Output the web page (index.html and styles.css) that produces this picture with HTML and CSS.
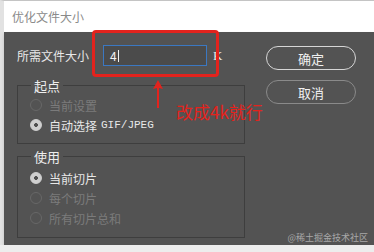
FILE: index.html
```html
<!DOCTYPE html>
<html lang="zh-CN">
  <head>
    <meta charset="UTF-8" />
    <title>优化文件大小</title>
    <link rel="stylesheet" href="styles.css">
  </head>
  <body>
    <div class="window">
      <div class="titlebar">优化文件大小</div>
      <div class="panel">
        <div class="main">
          <div class="size-row">
            <label class="size-label">所需文件大小</label>
            <div class="size-input">4<span class="caret"></span></div>
            <span class="unit">K</span>
          </div>
          <fieldset class="group">
            <legend>起点</legend>
            <div class="option disabled"><span class="radio"></span>当前设置</div>
            <div class="option"><span class="radio checked"></span>自动选择 <span class="mono">GIF/JPEG</span></div>
          </fieldset>
          <fieldset class="group use">
            <legend>使用</legend>
            <div class="option"><span class="radio checked"></span>当前切片</div>
            <div class="option disabled"><span class="radio"></span>每个切片</div>
            <div class="option disabled"><span class="radio"></span>所有切片总和</div>
          </fieldset>
        </div>
        <div class="actions">
          <button class="btn primary">确定</button>
          <button class="btn">取消</button>
        </div>
      </div>

      <!-- annotation drawn over the dialog -->
      <div class="note-box"></div>
      <svg class="note-arrow" width="12" height="28" viewBox="0 0 12 28">
        <path d="M6 0 L11 9 L7 8 L7 28 L5 28 L5 8 L1 9 Z" fill="#e3231d" />
      </svg>
      <div class="note-text">改成4k就行</div>
      <div class="watermark">@稀土掘金技术社区</div>
      <div class="edge"></div>
    </div>
  </body>
</html>
```

FILE: styles.css
```css
body {
  margin: 0;
  background: #ededed;
  font-family: "Noto Sans CJK SC", "Liberation Sans", sans-serif;
}
.window {
  position: relative;
  width: 370px;
  border-left: 4px solid #e2e2e2;
  border-top: 1px solid #c4c4c4;
}
.titlebar {
  height: 31px;
  background: #ffffff;
  color: #8a8a8a;
  font-size: 12px;
  line-height: 31px;
  padding-left: 8px;
}
.panel {
  display: flex;
  height: 213px;
  background: #535353;
  color: #e8e8e8;
  box-shadow: 0 2px 3px rgba(0, 0, 0, 0.15);
}
.main {
  width: 228px;
  padding: 13px 0 0 13px;
}
.size-row {
  display: flex;
  align-items: center;
  font-size: 12px;
}
.size-label {
  width: 72px;
  margin-right: 14px;
}
.size-input {
  width: 96px;
  height: 19px;
  border: 1px solid #3b78c2;
  background: #4b4b4b;
  color: #f2f2f2;
  font-size: 12px;
  line-height: 19px;
  padding-left: 6px;
}
.caret {
  display: inline-block;
  width: 1px;
  height: 12px;
  background: #f2f2f2;
  margin-left: 1px;
  vertical-align: -1px;
}
.unit {
  margin-left: 6px;
  font-family: "Liberation Serif", serif;
  font-size: 13px;
}
.group {
  margin: 10px 0 0 0;
  padding: 0 0 8px 12px;
  border: 1px solid #3e3e3e;
  font-size: 12px;
}
.group.use {
  margin-top: 3px;
  padding-top: 2px;
  padding-bottom: 9px;
}
.group legend {
  font-size: 13px;
  padding: 0 3px;
  margin-left: 1px;
  color: #eeeeee;
}
.option {
  display: flex;
  align-items: center;
  height: 20px;
}
.option.disabled {
  color: #7b7b7b;
}
.radio {
  width: 10px;
  height: 10px;
  border: 1px solid #676767;
  border-radius: 50%;
  margin-right: 7px;
}
.radio.checked {
  background: radial-gradient(circle, #505050 0 1.6px, #cfcfcf 2.2px);
  border-color: #cfcfcf;
}
.mono {
  font-family: "Liberation Mono", monospace;
  font-size: 11px;
  margin-left: 4px;
}
.actions {
  display: flex;
  flex-direction: column;
  gap: 10px;
  padding: 14px 0 0 21px;
}
.btn {
  width: 90px;
  height: 24px;
  border: 1px solid #8a8a8a;
  border-radius: 12px;
  background: transparent;
  color: #f0f0f0;
  font-family: "Noto Sans CJK SC", sans-serif;
  font-size: 13px;
  padding: 0;
}
.btn.primary {
  border: 1.5px solid #d6d6d6;
}
.note-box {
  position: absolute;
  left: 88px;
  top: 29px;
  width: 121px;
  height: 41px;
  border: 3px solid #e3231d;
  border-radius: 4px;
}
.note-arrow {
  position: absolute;
  left: 148px;
  top: 79px;
}
.note-text {
  position: absolute;
  left: 172px;
  top: 100px;
  color: #e3231d;
  font-size: 17px;
  line-height: 22px;
}
.watermark {
  position: absolute;
  right: 6px;
  top: 230px;
  color: #a8a8a8;
  font-size: 9px;
}
.edge {
  position: absolute;
  left: 331px;
  top: 245px;
  width: 39px;
  height: 6px;
  background: #4a4a4a;
  border-left: 2px solid #ffffff;
}
```
